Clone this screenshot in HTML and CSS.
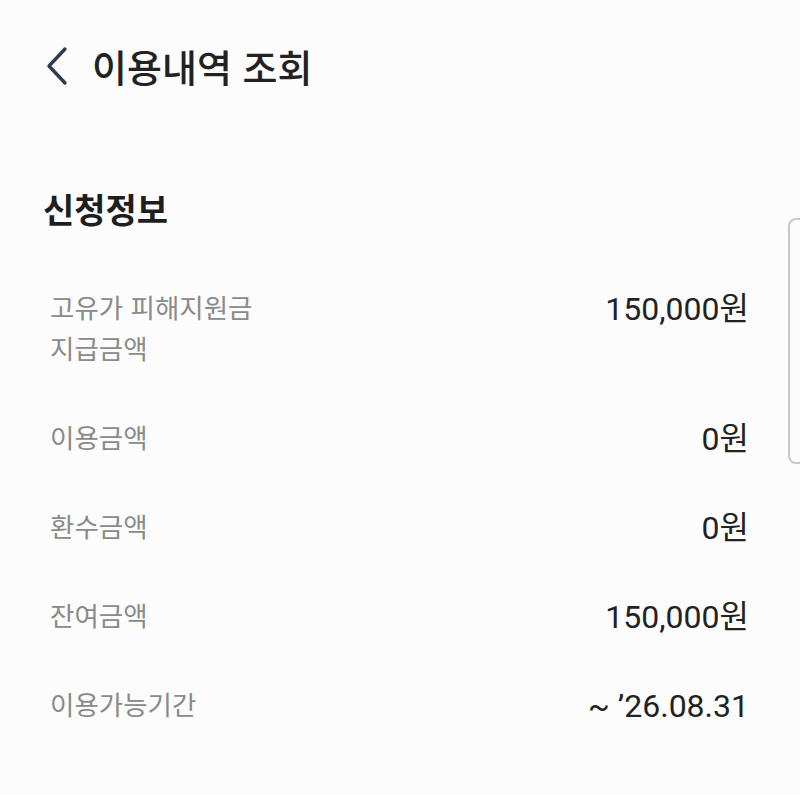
FILE: index.html
```html
<!DOCTYPE html>
<html lang="ko">
<head>
    <meta charset="UTF-8">
    <meta name="viewport" content="width=device-width, initial-scale=1.0">
    <title>이용내역 조회</title>
    <link rel="stylesheet" href="styles.css">
</head>
<body>
<div id="page">
    <header class="topbar">
        <button class="back-button" aria-label="뒤로">
            <svg width="26" height="40" viewBox="0 0 26 40">
                <path d="M21 3 L5 20 L21 37" fill="none" stroke="#2f3b50" stroke-width="3.4" stroke-linecap="round" stroke-linejoin="round"/>
            </svg>
        </button>
        <h1>이용내역 조회</h1>
    </header>

    <section class="info">
        <h2>신청정보</h2>
        <div class="row">
            <div class="label">고유가 피해지원금<br>지급금액</div>
            <div class="value">150,000원</div>
        </div>
        <div class="row">
            <div class="label">이용금액</div>
            <div class="value">0원</div>
        </div>
        <div class="row">
            <div class="label">환수금액</div>
            <div class="value">0원</div>
        </div>
        <div class="row">
            <div class="label">잔여금액</div>
            <div class="value">150,000원</div>
        </div>
        <div class="row">
            <div class="label">이용가능기간</div>
            <div class="value">~ ’26.08.31</div>
        </div>
    </section>

    <div class="scroll-handle"></div>
</div>
</body>
</html>
```

FILE: styles.css
```css
body, html {
    margin: 0;
    padding: 0;
    height: 100%;
    font-family: Roboto, "Noto Sans CJK KR", sans-serif;
    background-color: #fcfcfc;
    color: #222;
}

#page {
    position: relative;
    height: 100%;
    overflow: hidden;
}

.topbar {
    display: flex;
    align-items: center;
    padding: 44px 0 0 44px;
    height: 44px;
}

.back-button {
    border: none;
    background: none;
    padding: 0;
    margin-right: 22px;
    display: flex;
    cursor: pointer;
}

h1 {
    margin: 0;
    font-family: "Noto Sans CJK KR", sans-serif;
    font-size: 38px;
    font-weight: 500;
    line-height: 44px;
    color: #222;
}

.info {
    padding: 0 51px 0 50px;
}

h2 {
    margin: 101px 0 57px -7px;
    font-family: "Noto Sans CJK KR", sans-serif;
    font-size: 34px;
    font-weight: 700;
    line-height: 40px;
    color: #1e1e1e;
}

.row {
    display: flex;
    justify-content: space-between;
    align-items: flex-start;
    margin-bottom: 48px;
}

.label {
    font-family: "Noto Sans CJK KR", sans-serif;
    font-size: 26.5px;
    line-height: 41px;
    color: #8a8a8a;
}

.value {
    font-size: 32px;
    line-height: 41px;
    color: #222;
    padding-top: 3px;
    margin-bottom: -3px;
}

.scroll-handle {
    position: absolute;
    top: 218px;
    right: -12px;
    width: 20px;
    height: 242px;
    border: 2px solid #c8c8c8;
    border-radius: 8px;
    background-color: #fcfcfc;
}
```
